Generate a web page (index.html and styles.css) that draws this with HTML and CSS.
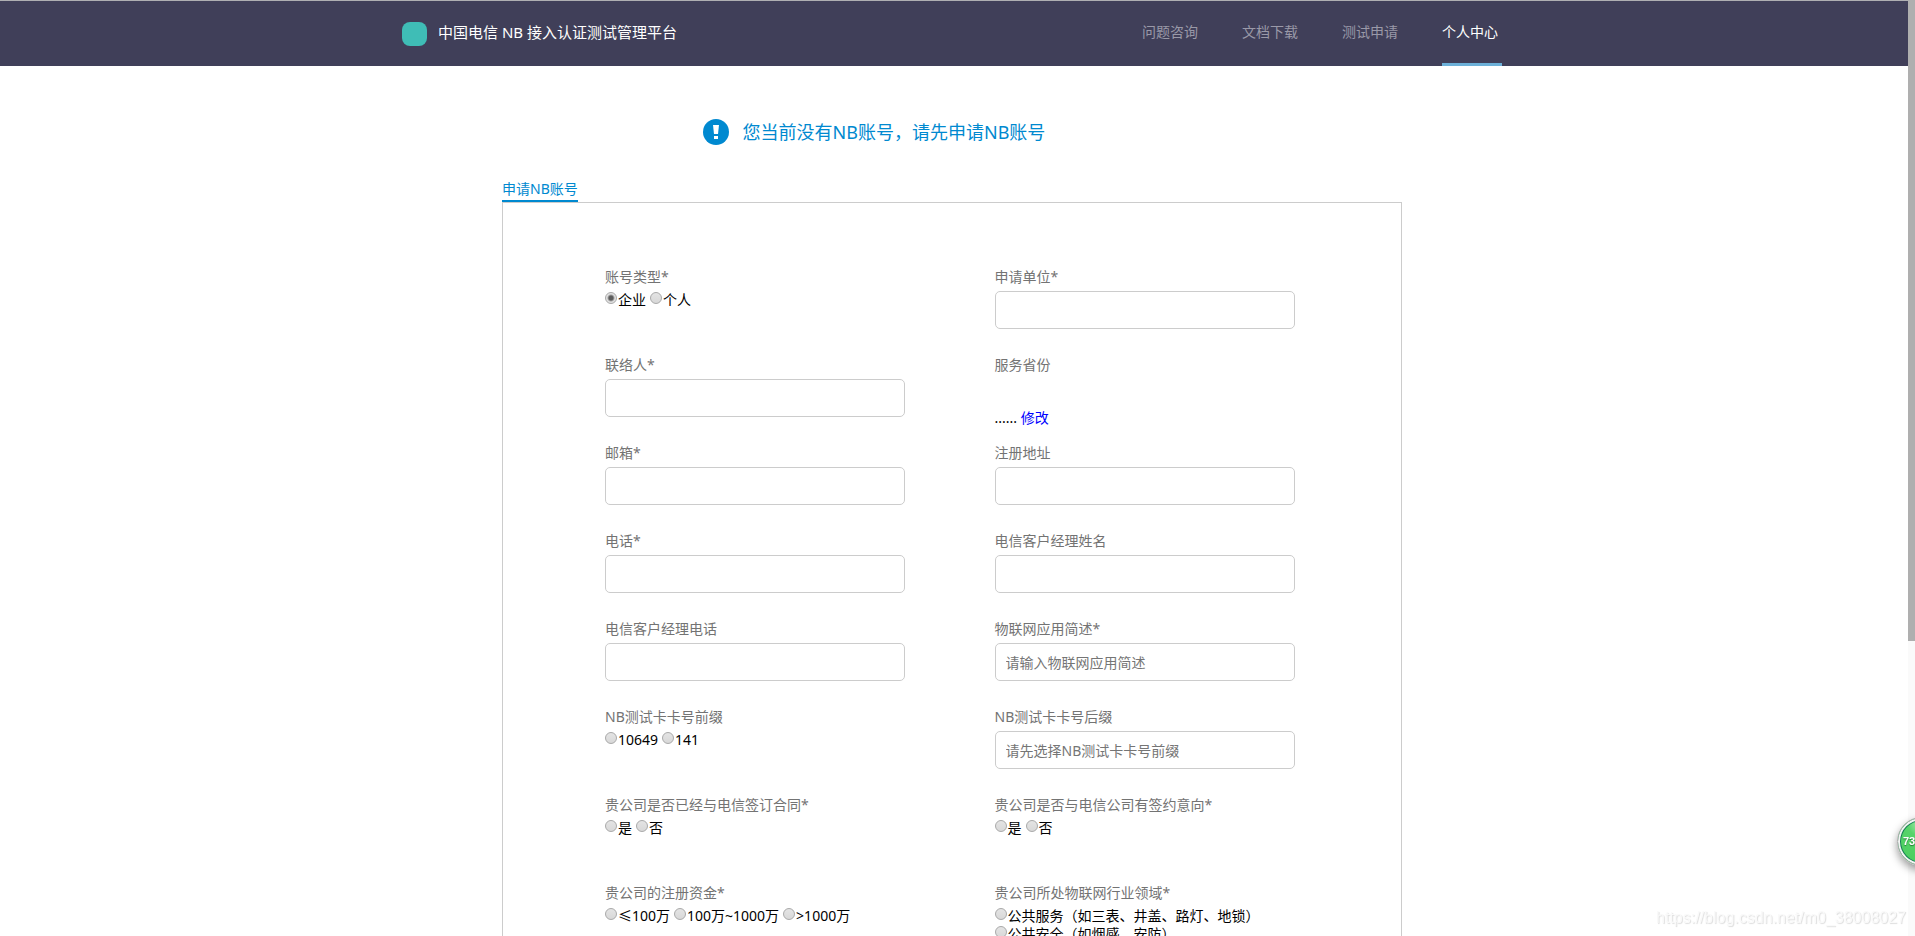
FILE: index.html
```html
<!DOCTYPE html>
<html lang="zh-CN">
<head>
<meta charset="utf-8">
<title>中国电信 NB 接入认证测试管理平台</title>
<link rel="stylesheet" href="styles.css">
</head>
<body>
<header class="header">
  <div class="header-inner">
    <span class="logo"></span>
    <span class="brand">中国电信 NB 接入认证测试管理平台</span>
    <nav class="nav">
      <a class="nav-link" href="#">问题咨询</a>
      <a class="nav-link" href="#">文档下载</a>
      <a class="nav-link" href="#">测试申请</a>
      <a class="nav-link active" href="#">个人中心</a>
    </nav>
  </div>
</header>
<main class="main">
  <p class="notice">
    <svg class="notice-icon" viewBox="0 0 26 26" aria-hidden="true"><circle cx="13" cy="13" r="13" fill="#0089d0"/><path d="M10 6h6l-1 9h-4z" fill="#fff"/><rect x="11" y="17" width="4" height="3" fill="#fff"/></svg>
    <span>您当前没有NB账号，请先申请NB账号</span>
  </p>
  <div class="tabs"><h1 class="tab">申请NB账号</h1></div>
  <form class="panel">
    <fieldset class="field">
      <legend class="label">账号类型*</legend>
      <div class="options">
        <label><input class="radio" type="radio" name="type" checked>企业</label>
        <label><input class="radio" type="radio" name="type">个人</label>
      </div>
    </fieldset>
    <div class="field">
      <label class="label" for="company">申请单位*</label>
      <input class="text" id="company" type="text">
    </div>
    <div class="field">
      <label class="label" for="contact">联络人*</label>
      <input class="text" id="contact" type="text">
    </div>
    <div class="field">
      <span class="label">服务省份</span>
      <div class="province">...... <a class="edit" href="#">修改</a></div>
    </div>
    <div class="field">
      <label class="label" for="email">邮箱*</label>
      <input class="text" id="email" type="text">
    </div>
    <div class="field">
      <label class="label" for="address">注册地址</label>
      <input class="text" id="address" type="text">
    </div>
    <div class="field">
      <label class="label" for="phone">电话*</label>
      <input class="text" id="phone" type="text">
    </div>
    <div class="field">
      <label class="label" for="manager">电信客户经理姓名</label>
      <input class="text" id="manager" type="text">
    </div>
    <div class="field">
      <label class="label" for="manager-phone">电信客户经理电话</label>
      <input class="text" id="manager-phone" type="text">
    </div>
    <div class="field">
      <label class="label" for="summary">物联网应用简述*</label>
      <input class="text" id="summary" type="text" placeholder="请输入物联网应用简述">
    </div>
    <fieldset class="field">
      <legend class="label">NB测试卡卡号前缀</legend>
      <div class="options">
        <label><input class="radio" type="radio" name="prefix">10649</label>
        <label><input class="radio" type="radio" name="prefix">141</label>
      </div>
    </fieldset>
    <div class="field">
      <label class="label" for="suffix">NB测试卡卡号后缀</label>
      <input class="text" id="suffix" type="text" placeholder="请先选择NB测试卡卡号前缀">
    </div>
    <fieldset class="field">
      <legend class="label">贵公司是否已经与电信签订合同*</legend>
      <div class="options">
        <label><input class="radio" type="radio" name="contract">是</label>
        <label><input class="radio" type="radio" name="contract">否</label>
      </div>
    </fieldset>
    <fieldset class="field">
      <legend class="label">贵公司是否与电信公司有签约意向*</legend>
      <div class="options">
        <label><input class="radio" type="radio" name="intent">是</label>
        <label><input class="radio" type="radio" name="intent">否</label>
      </div>
    </fieldset>
    <fieldset class="field">
      <legend class="label">贵公司的注册资金*</legend>
      <div class="options">
        <label><input class="radio" type="radio" name="capital">≤100万</label>
        <label><input class="radio" type="radio" name="capital">100万~1000万</label>
        <label><input class="radio" type="radio" name="capital">&gt;1000万</label>
      </div>
    </fieldset>
    <fieldset class="field">
      <legend class="label">贵公司所处物联网行业领域*</legend>
      <div class="options stacked">
        <label><input class="radio" type="radio" name="industry">公共服务（如三表、井盖、路灯、地锁）</label>
        <label><input class="radio" type="radio" name="industry">公共安全（如烟感、安防）</label>
      </div>
    </fieldset>
  </form>
</main>
<div class="scrollbar"><div class="thumb"></div></div>
<div class="badge">73</div>
<div class="watermark">https://blog.csdn.net/m0_38008027</div>
</body>
</html>
```

FILE: styles.css
```css
* { box-sizing: border-box; }
body {
  margin: 0;
  height: 100vh;
  overflow: hidden;
  background: #fff;
  color: #000;
  font: 14px/18px "Noto Sans", "Noto Sans CJK SC", sans-serif;
}
a { text-decoration: none; }

.header {
  background: #403f59;
  border-top: 1px solid #afafb2;
  padding-right: 11px;
}
.header-inner {
  max-width: 1100px;
  height: 65px;
  margin: 0 auto;
  display: flex;
  align-items: center;
}
.logo {
  width: 25px;
  height: 24px;
  margin-right: 11px;
  border-radius: 8px;
  background: #3fbdb6;
}
.brand { color: #fff; font-size: 15px; padding-bottom: 3px; }
.nav {
  display: flex;
  gap: 40px;
  margin-left: auto;
  align-self: stretch;
}
.nav-link {
  width: 60px;
  line-height: 62px;
  border-bottom: 3px solid transparent;
  color: #9a99a8;
}
.nav-link.active { color: #fff; border-color: #6cb0d8; }

.main { padding: 53px 11px 0 0; }
.notice {
  display: flex;
  justify-content: center;
  align-items: center;
  gap: 14px;
  max-width: 900px;
  margin: 0 auto 34px;
  padding-right: 156px;
  color: #0089d0;
  font-size: 18px;
  line-height: 26px;
}
.notice-icon { width: 26px; height: 26px; }
.tabs {
  display: flex;
  max-width: 900px;
  margin: 0 auto;
}
.tab {
  margin: 0;
  padding-bottom: 1px;
  border-bottom: 2px solid #0089d0;
  color: #0089d0;
  font-size: 14px;
  font-weight: 400;
  line-height: 20px;
}

.panel {
  max-width: 900px;
  margin: 0 auto;
  padding: 64px 17px 0 102px;
  border: 1px solid #ccc;
  display: grid;
  grid-template-columns: 1fr 1fr;
}
.field {
  min-width: 0;
  min-height: 88px;
  margin: 0;
  padding: 0;
  border: 0;
}
.label {
  display: block;
  margin-bottom: 4px;
  padding: 0;
  color: #737373;
  line-height: 20px;
}
.text {
  display: block;
  width: 300px;
  height: 38px;
  padding: 0 10px;
  border: 1px solid #ccc;
  border-radius: 5px;
  background: #fff;
  font: inherit;
}
.text::placeholder { color: #757575; opacity: 1; }
.options { display: flex; gap: 4px; }
.stacked { flex-direction: column; gap: 0; }
.options label { display: flex; align-items: flex-start; gap: 1px; white-space: nowrap; }
.radio {
  appearance: none;
  width: 12px;
  height: 12px;
  margin: 1px 0 0;
  border: 1px solid #a9a9a9;
  border-radius: 50%;
  background: linear-gradient(#e4e4e4, #d8d8d8);
}
.radio:checked {
  background: radial-gradient(circle, #5c5c5c 0 2px, #e2e2e2 4px);
}
.province { padding-top: 30px; }
.edit { color: #00f; }

.scrollbar {
  position: fixed;
  top: 0;
  right: 0;
  width: 7px;
  height: 100%;
  background: #fafafa;
}
.thumb { height: 68.5%; background: #afafaf; }
.badge {
  position: fixed;
  right: -31px;
  bottom: 70px;
  width: 49px;
  height: 49px;
  padding-left: 5px;
  border: 1px solid #aaa;
  border-radius: 50%;
  background: radial-gradient(circle at 50% 10%, #b3edb9 0, #58d36a 14px, #45cd5c 100%);
  box-shadow: inset 0 0 0 2px #f2f2f2, inset 0 0 0 3px #168054, 0 4px 8px rgba(0, 0, 0, .4);
  color: #fff;
  font: bold 11px/47px "Liberation Sans", sans-serif;
  text-shadow: 0 1px 1px #237a35;
}
.watermark {
  position: fixed;
  right: 9px;
  bottom: 9px;
  color: #fafafa;
  text-shadow: 1px 1px 1px #ddd;
  font: 16px/18px "Liberation Sans", sans-serif;
}
```
